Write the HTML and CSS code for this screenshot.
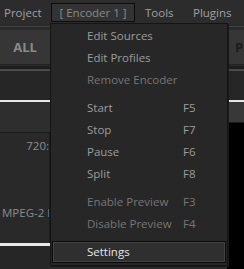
FILE: index.html
```html
<!DOCTYPE html>
<html lang="en">
<head>
  <meta charset="UTF-8" />
  <title>Encoder</title>
  <link rel="stylesheet" href="styles.css">
</head>
<body>
  <div class="menubar">
    <span class="top-item project">Project</span>
    <span class="top-item open">[ Encoder 1 ]</span>
    <span class="top-item tools">Tools</span>
    <span class="top-item">Plugins</span>
  </div>

  <div class="workspace">
    <div class="col left">
      <div class="toolbar"><div class="tb-btn">ALL</div></div>
      <div class="strip"></div>
      <div class="panel-head"></div>
      <div class="panel-body">
        <div class="cell res">720:</div>
        <div class="cell codec">MPEG-2 HI</div>
      </div>
      <div class="panel-foot"></div>
    </div>
    <div class="col mid"></div>
    <div class="col right">
      <div class="toolbar"><div class="tb-btn">Pa</div></div>
      <div class="strip"></div>
      <div class="panel-head"></div>
      <div class="black"></div>
    </div>
  </div>

  <div class="dropdown">
    <div class="item">Edit Sources</div>
    <div class="item">Edit Profiles</div>
    <div class="item disabled">Remove Encoder</div>
    <div class="sep"></div>
    <div class="item">Start<span class="key">F5</span></div>
    <div class="item">Stop<span class="key">F7</span></div>
    <div class="item">Pause<span class="key">F6</span></div>
    <div class="item">Split<span class="key">F8</span></div>
    <div class="sep"></div>
    <div class="item disabled">Enable Preview<span class="key">F3</span></div>
    <div class="item disabled">Disable Preview<span class="key">F4</span></div>
    <div class="sep"></div>
    <div class="item active">Settings</div>
  </div>
</body>
</html>
```

FILE: styles.css
```css
body {
  margin: 0;
  width: 244px;
  height: 269px;
  overflow: hidden;
  background-color: #2a2a2a;
  font-family: "Open Sans", "Noto Sans", sans-serif;
  font-size: 11.5px;
  color: #a0a0a0;
  position: relative;
}
.menubar {
  height: 24px;
  background-color: #2c2c2c;
  display: flex;
  align-items: center;
  padding-left: 4px;
  white-space: nowrap;
}
.top-item {
  line-height: 17px;
}
.project {
  width: 47px;
}
.top-item.open {
  width: 82px;
  text-align: center;
  background-color: #333;
  border: 1px solid #0c0c0c;
  color: #8a8a8a;
}
.tools {
  margin-left: 10px;
  width: 48px;
}
.workspace {
  display: flex;
  height: 245px;
}
.col {
  display: flex;
  flex-direction: column;
  overflow: hidden;
}
.left {
  width: 50px;
}
.mid {
  width: 177px;
}
.right {
  flex: 1;
}
.toolbar {
  border-top: 1px solid #444;
  margin-top: 2px;
  padding-top: 3px;
  height: 36px;
  border-bottom: 3px solid #1e1e1e;
}
.tb-btn {
  height: 34px;
  background-color: #363636;
  border-bottom: 1px solid #222;
  font-weight: bold;
  color: #8a8a8a;
  line-height: 34px;
  text-align: center;
  font-size: 13px;
}
.left .tb-btn {
  width: 50px;
}
.right .tb-btn {
  text-align: left;
  padding-left: 8px;
  color: #1c1c1c;
}
.strip {
  border-top: 2px solid #4a4a4a;
  height: 29px;
  background-color: #262626;
}
.panel-head {
  border-top: 2px solid #e6e6e6;
  height: 30px;
  background-color: #2e2e2e;
  border-bottom: 1px solid #1a1a1a;
}
.right .panel-head {
  height: 20px;
  background-color: #383838;
}
.panel-body {
  height: 110px;
  background-color: #292929;
  border-right: 1px solid #1c1c1c;
}
.cell {
  white-space: nowrap;
  color: #8c8c8c;
}
.res {
  text-align: right;
  padding-top: 5px;
  height: 67px;
}
.codec {
  padding-left: 2px;
  overflow: hidden;
}
.panel-foot {
  border-top: 3px solid #e8e8e8;
  flex: 1;
  background-color: #262626;
}
.black {
  flex: 1;
  background-color: #000;
}
.dropdown {
  position: absolute;
  left: 50px;
  top: 23px;
  width: 174px;
  padding: 1px 1px 2px;
  background-color: #272727;
  border: 1px solid #141414;
  box-shadow: 1px 1px 0 #1a1a1a;
  white-space: nowrap;
}
.item {
  height: 22px;
  line-height: 22px;
  padding-left: 35px;
  position: relative;
  color: #9c9c9c;
}
.item.disabled {
  color: #767676;
}
.key {
  position: absolute;
  left: 131px;
}
.sep {
  height: 6px;
}
.item.active {
  color: #e6e6e6;
  background-color: #2f2f2f;
  border: 1px solid #0a0a0a;
  box-shadow: inset 0 0 0 1px #444;
  height: 20px;
  line-height: 20px;
  padding-left: 34px;
}
```
